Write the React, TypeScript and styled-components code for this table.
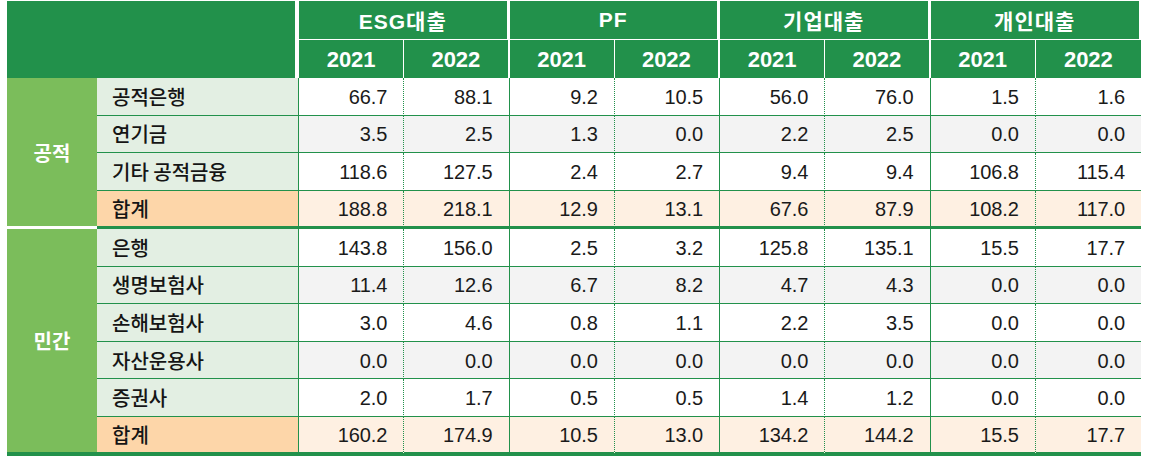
import styled, { createGlobalStyle, css } from "styled-components";

const GlobalStyle = createGlobalStyle`
  html, body {
    margin: 0;
    padding: 0;
    background: #ffffff;
  }
  body {
    font-family: "Liberation Sans", "Noto Sans CJK KR", sans-serif;
  }
`;

const GREEN = "#22914b";
const LIGHT_GREEN = "#7bbd5b";
const LABEL_BG = "#e3efe3";
const SUM_LABEL_BG = "#fdd6a9";
const SUM_BG = "#fef0e2";
const ALT_BG = "#f3f3f3";

type Row = {
  label: string;
  values: string[];
  sum?: boolean;
};

const groups = ["ESG대출", "PF", "기업대출", "개인대출"];

const publicRows: Row[] = [
  { label: "공적은행", values: ["66.7", "88.1", "9.2", "10.5", "56.0", "76.0", "1.5", "1.6"] },
  { label: "연기금", values: ["3.5", "2.5", "1.3", "0.0", "2.2", "2.5", "0.0", "0.0"] },
  { label: "기타 공적금융", values: ["118.6", "127.5", "2.4", "2.7", "9.4", "9.4", "106.8", "115.4"] },
  { label: "합계", values: ["188.8", "218.1", "12.9", "13.1", "67.6", "87.9", "108.2", "117.0"], sum: true },
];

const privateRows: Row[] = [
  { label: "은행", values: ["143.8", "156.0", "2.5", "3.2", "125.8", "135.1", "15.5", "17.7"] },
  { label: "생명보험사", values: ["11.4", "12.6", "6.7", "8.2", "4.7", "4.3", "0.0", "0.0"] },
  { label: "손해보험사", values: ["3.0", "4.6", "0.8", "1.1", "2.2", "3.5", "0.0", "0.0"] },
  { label: "자산운용사", values: ["0.0", "0.0", "0.0", "0.0", "0.0", "0.0", "0.0", "0.0"] },
  { label: "증권사", values: ["2.0", "1.7", "0.5", "0.5", "1.4", "1.2", "0.0", "0.0"] },
  { label: "합계", values: ["160.2", "174.9", "10.5", "13.0", "134.2", "144.2", "15.5", "17.7"], sum: true },
];

const Page = styled.div`
  padding: 1px 0 0 7px;
`;

const Grid = styled.div`
  display: grid;
  width: 1134px;
  grid-template-columns: 90px 202px repeat(8, 105.25px);
  grid-template-rows:
    39px 38px
    37.5px 37.5px 37.5px 38.5px
    37.6px 37.6px 37.6px 37.6px 37.6px 39px;
`;

const Corner = styled.div`
  grid-column: 1 / 3;
  grid-row: 1 / 3;
  background: ${GREEN};
  border-right: 4px solid #ffffff;
`;

const GroupHead = styled.div<{ $last?: boolean }>`
  grid-column: span 2;
  display: flex;
  align-items: center;
  justify-content: center;
  background: ${GREEN};
  color: #ffffff;
  font-weight: 700;
  font-size: 21px;
  border-bottom: 1px solid #ffffff;
  border-right: ${(p) => (p.$last ? "2px" : "3px")} solid #ffffff;
  letter-spacing: 1px;
`;

const YearHead = styled.div<{ $groupEnd?: boolean; $last?: boolean }>`
  display: flex;
  align-items: center;
  justify-content: center;
  background: ${GREEN};
  color: #ffffff;
  font-weight: 700;
  font-size: 22px;
  padding-top: 2px;
  border-right: ${(p) => (p.$last ? "0" : p.$groupEnd ? "2px" : "1px")} solid #ffffff;
`;

const GroupCell = styled.div<{ $rows: string; $end?: boolean }>`
  grid-column: 1;
  grid-row: ${(p) => p.$rows};
  display: flex;
  align-items: center;
  justify-content: center;
  background: ${LIGHT_GREEN};
  color: #ffffff;
  font-family: "Noto Sans CJK KR", sans-serif;
  font-weight: 700;
  font-size: 20px;
  border-bottom: ${(p) => (p.$end ? `4px solid ${GREEN}` : "3px solid #ffffff")};
`;

const bottomLine = (sum?: boolean, end?: boolean) =>
  end
    ? css`border-bottom: 4px solid ${GREEN};`
    : sum
      ? css`border-bottom: 3px solid ${GREEN};`
      : css`border-bottom: 1px solid ${GREEN};`;

const LabelCell = styled.div<{ $sum?: boolean; $end?: boolean }>`
  display: flex;
  align-items: center;
  padding-left: 15px;
  background: ${(p) => (p.$sum ? SUM_LABEL_BG : LABEL_BG)};
  color: #151515;
  font-family: "Noto Sans CJK KR", sans-serif;
  font-weight: 500;
  font-size: 20px;
  border-right: 1px solid ${GREEN};
  ${(p) => bottomLine(p.$sum, p.$end)}
`;

const ValueCell = styled.div<{
  $sum?: boolean;
  $alt?: boolean;
  $end?: boolean;
  $edge: "dotted" | "solid" | "none";
}>`
  display: flex;
  align-items: center;
  justify-content: flex-end;
  padding-right: 16px;
  padding-top: 2px;
  background: ${(p) => (p.$sum ? SUM_BG : p.$alt ? ALT_BG : "#ffffff")};
  color: #1a1a1a;
  font-size: 20px;
  letter-spacing: -0.1px;
  border-right: ${(p) => (p.$edge === "none" ? "0" : `1px ${p.$edge} ${GREEN}`)};
  ${(p) => bottomLine(p.$sum, p.$end)}
`;

const BodyRows = ({ rows, end }: { rows: Row[]; end?: boolean }) => (
  <>
    {rows.map((row, r) => {
      const isEnd = end && r === rows.length - 1;
      return (
        <div key={row.label + r} style={{ display: "contents" }}>
          <LabelCell $sum={row.sum} $end={isEnd}>
            {row.label}
          </LabelCell>
          {row.values.map((v, i) => (
            <ValueCell
              key={i}
              $sum={row.sum}
              $alt={r % 2 === 1}
              $end={isEnd}
              $edge={i === 7 ? "none" : i % 2 === 0 ? "dotted" : "solid"}
            >
              {v}
            </ValueCell>
          ))}
        </div>
      );
    })}
  </>
);

export default function App() {
  return (
    <Page>
      <GlobalStyle />
      <Grid>
        <Corner />
        {groups.map((g, i) => (
          <GroupHead key={g} $last={i === groups.length - 1}>
            {g}
          </GroupHead>
        ))}
        {groups.map((g, gi) =>
          ["2021", "2022"].map((y, yi) => (
            <YearHead
              key={g + y}
              $groupEnd={yi === 1}
              $last={gi === groups.length - 1 && yi === 1}
            >
              {y}
            </YearHead>
          ))
        )}
        <GroupCell $rows="3 / 7">공적</GroupCell>
        <GroupCell $rows="7 / 13" $end>
          민간
        </GroupCell>
        <BodyRows rows={publicRows} />
        <BodyRows rows={privateRows} end />
      </Grid>
    </Page>
  );
}
